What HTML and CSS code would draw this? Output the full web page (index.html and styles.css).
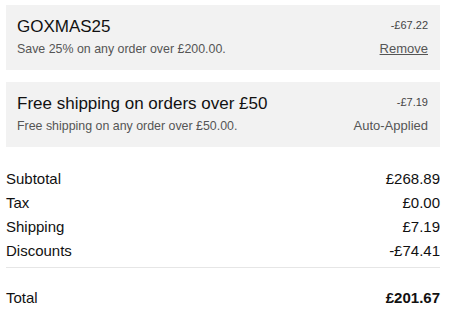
FILE: index.html
```html
<!DOCTYPE html>
<html>
<head>
<meta charset="utf-8">
<link rel="stylesheet" href="styles.css">
</head>
<body>
<div class="summary">
  <div class="discount">
    <div class="row">
      <div class="title">GOXMAS25</div>
      <div class="amount">-£67.22</div>
    </div>
    <div class="row base">
      <div class="desc">Save 25% on any order over £200.00.</div>
      <a class="action link">Remove</a>
    </div>
  </div>
  <div class="discount">
    <div class="row">
      <div class="title">Free shipping on orders over £50</div>
      <div class="amount">-£7.19</div>
    </div>
    <div class="row base">
      <div class="desc">Free shipping on any order over £50.00.</div>
      <span class="action">Auto-Applied</span>
    </div>
  </div>
  <div class="totals">
    <div class="line"><span>Subtotal</span><span>£268.89</span></div>
    <div class="line"><span>Tax</span><span>£0.00</span></div>
    <div class="line"><span>Shipping</span><span>£7.19</span></div>
    <div class="line"><span>Discounts</span><span>-£74.41</span></div>
  </div>
  <div class="grand"><span>Total</span><span class="grand-value">£201.67</span></div>
</div>
</body>
</html>
```
FILE: styles.css
```css
* { box-sizing: border-box; }
body {
  margin: 0;
  background: #fff;
  font-family: "Liberation Sans", Arial, sans-serif;
  color: #111;
}
.summary {
  padding: 5px 9px 0 6px;
  display: flex;
  flex-direction: column;
}
.discount {
  background: #f2f2f2;
  height: 65px;
  padding: 10px 12px 11px 11px;
  margin-bottom: 12px;
  display: flex;
  flex-direction: column;
}
.row {
  display: flex;
  justify-content: space-between;
  align-items: flex-start;
}
.row.base { align-items: baseline; }
.title {
  font-size: 17px;
  line-height: 24px;
  color: #111;
}
.amount {
  font-size: 11px;
  line-height: 20px;
  color: #444;
}
.desc {
  font-size: 12.4px;
  line-height: 20px;
  color: #555;
}
.action {
  font-size: 13px;
  line-height: 20px;
  color: #555;
}
.link { text-decoration: underline; }
.totals {
  margin-top: 8px;
  padding-bottom: 4px;
  border-bottom: 1px solid #e6e6e6;
}
.line, .grand {
  display: flex;
  justify-content: space-between;
  font-size: 15px;
  line-height: 24px;
  color: #111;
}
.grand { margin-top: 18px; }
.grand-value { font-weight: 700; }
```
